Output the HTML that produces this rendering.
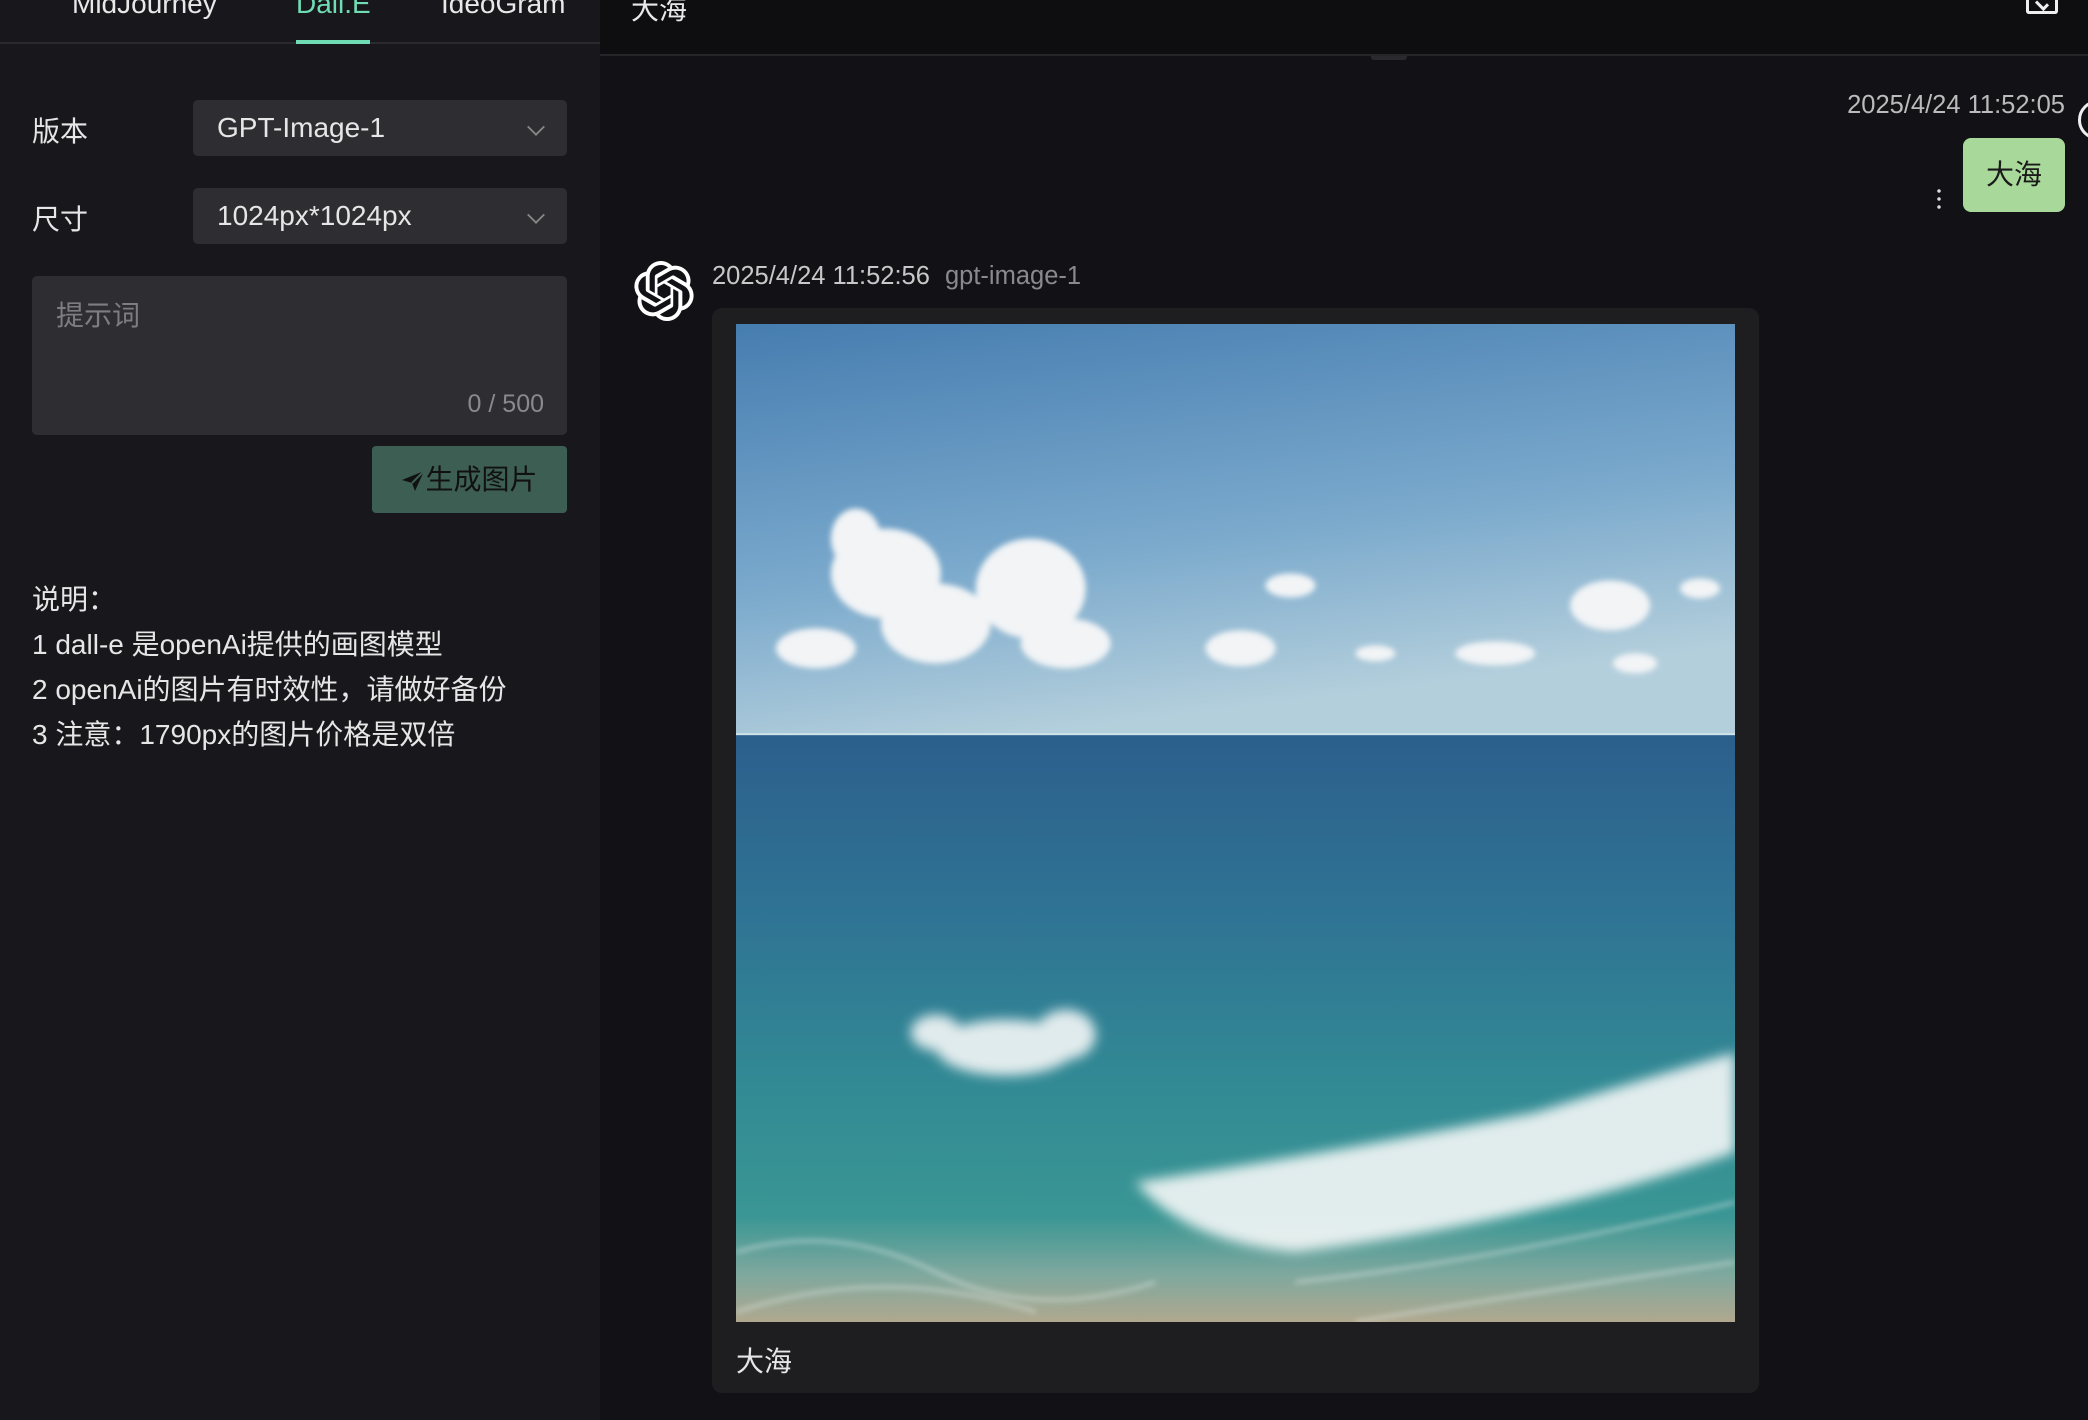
<!DOCTYPE html>
<html><head><meta charset="utf-8"><style>
*{margin:0;padding:0;box-sizing:border-box}
body{width:2088px;height:1420px;overflow:hidden;background:#111116;font-family:"Liberation Sans","Noto Sans CJK SC",sans-serif;position:relative;color:#e6e6e6}
.abs{position:absolute}
.left{left:0;top:0;width:600px;height:1420px;background:#18181c}
.tab{top:-12px;font-size:28px;color:#e8e8e8}
.lbl{left:32px;font-size:28px;color:#e6e6e6}
.sel{left:193px;width:374px;height:56px;background:#2e2e32;border-radius:5px;font-size:28px;color:#e6e6e6;padding-left:24px;line-height:56px}
.chev{position:absolute;right:24px;top:20px;width:14px;height:14px;border-right:2px solid #888;border-bottom:2px solid #888;transform:rotate(45deg) scale(.9)}
.note{left:32px;font-size:28px;color:#e6e6e6;line-height:45px}
</style></head><body>
<div class="abs left"></div>
<div class="abs" style="left:0;top:42px;width:600px;height:2px;background:#2a2a2e"></div>
<div class="abs tab" style="left:72px">MidJourney</div>
<div class="abs tab" style="left:296px;color:#6fdcb4">Dall.E</div>
<div class="abs" style="left:296px;top:40px;width:74px;height:4px;background:#6fdcb4"></div>
<div class="abs tab" style="left:441px">IdeoGram</div>
<div class="abs" style="left:600px;top:0;width:1488px;height:56px;background:#0e0e10;border-bottom:2px solid #26262a"></div>
<div class="abs tab" style="left:631px">大海</div>
<div class="abs" style="left:2026px;top:-6px;width:32px;height:20px;border:3px solid #eee;border-top:none;border-radius:0 0 3px 3px"></div>
<div class="abs" style="left:2036px;top:0;width:12px;height:8px;border-right:3px solid #eee;border-bottom:3px solid #eee;transform:rotate(45deg)"></div>
<div class="abs" style="left:1371px;top:56px;width:36px;height:4px;background:#2a2a2e;border-radius:0 0 3px 3px"></div>

<div class="abs lbl" style="top:110px">版本</div>
<div class="abs sel" style="top:100px">GPT-Image-1<div class="chev"></div></div>
<div class="abs lbl" style="top:198px">尺寸</div>
<div class="abs sel" style="top:188px">1024px*1024px<div class="chev"></div></div>
<div class="abs" style="left:32px;top:276px;width:535px;height:159px;background:#2e2e32;border-radius:5px"></div>
<div class="abs" style="left:56px;top:294px;font-size:28px;color:#7d7d82">提示词</div>
<div class="abs" style="left:420px;top:390px;width:124px;text-align:right;font-size:25px;color:#8a8a8e">0 / 500</div>
<div class="abs" style="left:372px;top:446px;width:195px;height:67px;background:#3d5e52;border-radius:4px;font-size:28px;color:#111;line-height:67px;text-align:center">
<svg width="24" height="22" viewBox="0 0 24 22" style="vertical-align:-3px"><path d="M1 10 L23 1 L14 21 L11 13 Z" fill="#111"/><path d="M11 13 L23 1" stroke="#3d5e52" stroke-width="2"/></svg>生成图片</div>
<div class="abs note" style="top:577px">说明：<br>1 dall-e 是openAi提供的画图模型<br>2 openAi的图片有时效性，请做好备份<br>3 注意：1790px的图片价格是双倍</div>

<div class="abs" style="right:23px;top:91px;font-size:25.5px;color:#bbb">2025/4/24 11:52:05</div>
<div class="abs" style="left:2078px;top:100px;width:40px;height:40px;border:3px solid #eee;border-radius:50%"></div>
<div class="abs" style="left:1963px;top:138px;width:102px;height:74px;background:#a9d89b;border-radius:8px;font-size:28px;color:#1a1a1a;text-align:center;line-height:74px">大海</div>
<div class="abs" style="left:1937px;top:187px;width:4px;height:22px;background:radial-gradient(circle,#ddd 1.5px,transparent 2px) 0 0/4px 8px"></div>

<svg class="abs" style="left:634px;top:261px" width="60" height="60" viewBox="0 0 24 24"><path fill="#fff" d="M22.28 9.82a5.98 5.98 0 0 0-.52-4.91 6.05 6.05 0 0 0-6.51-2.9A6.07 6.07 0 0 0 4.98 4.18a5.98 5.98 0 0 0-4 2.9 6.05 6.05 0 0 0 .74 7.1 5.98 5.98 0 0 0 .51 4.91 6.05 6.05 0 0 0 6.52 2.9A5.98 5.98 0 0 0 13.26 24a6.06 6.06 0 0 0 5.77-4.21 5.990 5.99 0 0 0 4-2.9 6.06 6.06 0 0 0-.75-7.07zm-9.02 12.61a4.48 4.48 0 0 1-2.88-1.04l.14-.08 4.78-2.76a.8.8 0 0 0 .39-.68v-6.74l2.02 1.17a.07.07 0 0 1 .04.05v5.58a4.5 4.5 0 0 1-4.49 4.5zm-9.66-4.13a4.47 4.47 0 0 1-.53-3.01l.14.09 4.78 2.76a.77.77 0 0 0 .78 0l5.84-3.37v2.33a.08.08 0 0 1-.03.06L9.74 19.95a4.5 4.5 0 0 1-6.14-1.65zM2.34 7.9a4.49 4.49 0 0 1 2.37-1.97V11.6a.77.77 0 0 0 .39.68l5.81 3.35-2.02 1.17a.08.08 0 0 1-.07 0l-4.83-2.79A4.5 4.5 0 0 1 2.34 7.87zm16.6 3.86L13.1 8.36 15.12 7.2a.08.08 0 0 1 .07 0l4.83 2.79a4.49 4.49 0 0 1-.68 8.1v-5.68a.79.79 0 0 0-.41-.67zm2.01-3.02l-.14-.09-4.77-2.78a.78.78 0 0 0-.79 0L9.41 9.23V6.9a.07.07 0 0 1 .03-.06l4.83-2.79a4.5 4.5 0 0 1 6.68 4.66zM8.31 12.86L6.29 11.7a.08.08 0 0 1-.04-.06V6.08a4.5 4.5 0 0 1 7.38-3.45l-.14.08-4.78 2.76a.8.8 0 0 0-.39.68zm1.1-2.37l2.6-1.5 2.6 1.5v3l-2.6 1.5-2.6-1.5z"/></svg>
<div class="abs" style="left:712px;top:262px;font-size:25.5px;color:#c8c8c8">2025/4/24 11:52:56 <span style="color:#8a8a8e;margin-left:8px">gpt-image-1</span></div>

<div class="abs" style="left:712px;top:308px;width:1047px;height:1085px;background:#1e1e21;border-radius:10px"></div>
<svg class="abs" style="left:736px;top:324px" width="999" height="998" viewBox="0 0 1000 1000" preserveAspectRatio="none">
<defs>
<linearGradient id="sky" x1="0" y1="0" x2="0.3" y2="1"><stop offset="0" stop-color="#467db0"/><stop offset=".6" stop-color="#7aa9cc"/><stop offset="1" stop-color="#b4cfdc"/></linearGradient>
<linearGradient id="sea" x1="0" y1="0" x2="0" y2="1"><stop offset="0" stop-color="#2c5f8c"/><stop offset=".3" stop-color="#2f7394"/><stop offset=".6" stop-color="#328a94"/><stop offset=".82" stop-color="#3a9694"/><stop offset=".92" stop-color="#7fa89e"/><stop offset="1" stop-color="#b0a88e"/></linearGradient>
<filter id="b"><feGaussianBlur stdDeviation="6"/></filter>
<filter id="b2"><feGaussianBlur stdDeviation="3"/></filter>
</defs>
<rect width="1000" height="412" fill="url(#sky)"/>
<rect y="411" width="1000" height="589" fill="url(#sea)"/>
<rect y="410" width="1000" height="2" fill="#cfe3ea"/>
<g fill="#f2f4f6" filter="url(#b2)">
<ellipse cx="150" cy="250" rx="55" ry="45"/><ellipse cx="200" cy="300" rx="55" ry="40"/><ellipse cx="120" cy="215" rx="25" ry="30"/>
<ellipse cx="295" cy="265" rx="55" ry="50"/><ellipse cx="330" cy="320" rx="45" ry="25"/>
<ellipse cx="80" cy="325" rx="40" ry="20"/><ellipse cx="505" cy="325" rx="35" ry="18"/>
<ellipse cx="555" cy="262" rx="25" ry="12"/><ellipse cx="875" cy="282" rx="40" ry="25"/><ellipse cx="965" cy="265" rx="20" ry="10"/>
<ellipse cx="760" cy="330" rx="40" ry="12"/><ellipse cx="640" cy="330" rx="20" ry="8"/><ellipse cx="900" cy="340" rx="22" ry="10"/>
</g>
<g fill="#f4f7f7" filter="url(#b)" opacity=".9">
<ellipse cx="270" cy="725" rx="70" ry="28"/><ellipse cx="330" cy="712" rx="30" ry="25"/><ellipse cx="200" cy="710" rx="25" ry="18"/>
<path d="M400 860 Q600 830 800 790 Q930 750 1000 730 L1000 830 Q800 900 560 930 Q450 920 400 860Z"/>
</g>
<g fill="none" stroke="#e8eeee" stroke-width="3" opacity=".55" filter="url(#b2)">
<path d="M0 930 Q100 900 200 950 T420 960"/><path d="M0 990 Q150 940 300 990"/><path d="M560 960 Q750 940 1000 880"/><path d="M620 1000 Q800 970 1000 940"/>
</g>
</svg>
<div class="abs" style="left:736px;top:1340px;font-size:28px;color:#e6e6e6">大海</div>
</body></html>
